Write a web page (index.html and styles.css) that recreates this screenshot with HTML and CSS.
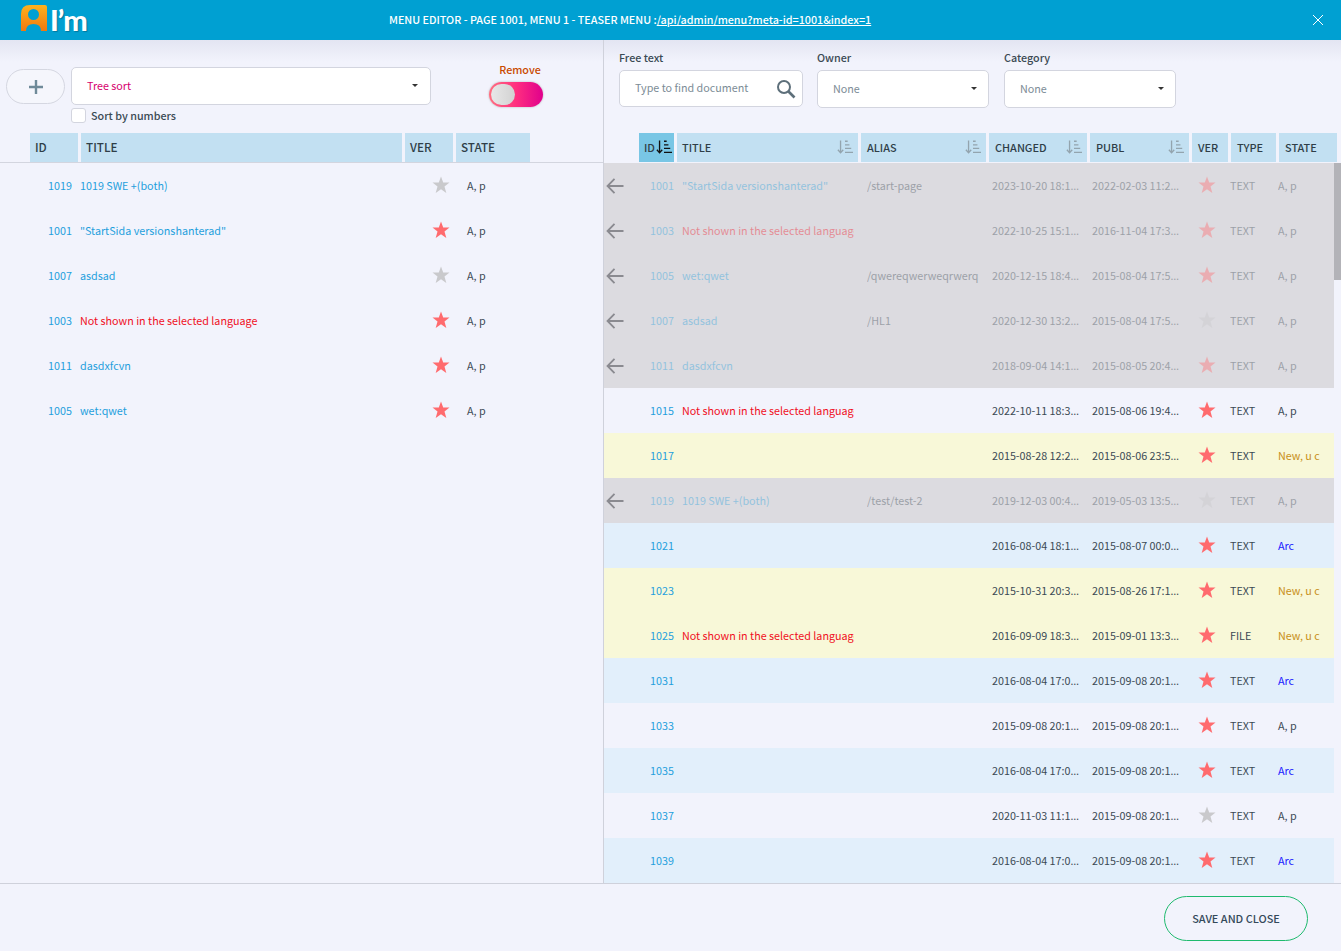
FILE: index.html
```html
<!DOCTYPE html>
<html>
<head>
    <title>Menu editor</title>
    <link rel="stylesheet" href="styles.css">
</head>
<body>
    <svg class="defs" width="0" height="0">
        <symbol id="star" viewBox="0 0 18 18"><path d="M9 .6l2.2 6h6.3l-5 3.9 1.8 6.4L9 13.2l-5.300 3.700 1.800-6.400-5-3.900h6.300z" fill="currentColor"/></symbol>
        <symbol id="back" viewBox="0 0 18 18"><path d="M17.500 9H1.500M8.500 1.800L1.500 9l7 7.200" fill="none" stroke="currentColor" stroke-width="1.800"/></symbol>
        <symbol id="sort" viewBox="0 0 18 16"><path d="M4 0v13M1 10.500L4 14l3-3.500M9 1h3M9 5h5M9 9h7M9 13.500h9" fill="none" stroke="currentColor" stroke-width="1.500"/></symbol>
    </svg>

    <header class="topbar">
        <div class="logo">
            <svg class="logo-mark" width="28" height="28" viewBox="0 0 28 28">
                <defs>
                    <linearGradient id="logo-fill" x1="0" y1="0" x2="0" y2="1">
                        <stop offset="0" stop-color="#ffb21e"/>
                        <stop offset="1" stop-color="#f0780f"/>
                    </linearGradient>
                </defs>
                <path d="M10 1h15q2 0 2 2v24h-6q0-7-7.500-7T6 27H1V10q0-9 9-9zM13.500 5a5.500 5.500 0 1 0 0 11 5.500 5.500 0 0 0 0-11z" fill="url(#logo-fill)"/>
            </svg>
            <span class="logo-text">I’m</span>
        </div>
        <div class="topbar-title">MENU EDITOR - PAGE 1001, MENU 1 - TEASER MENU :<a href="#">/api/admin/menu?meta-id=1001&amp;index=1</a></div>
        <svg class="close" width="12" height="12" viewBox="0 0 12 12"><path d="M1 1l10 10M11 1L1 11" fill="none" stroke="#fff" stroke-width="1"/></svg>
    </header>

    <main class="panes">
        <section class="pane pane-left">
            <div class="toolbar">
                <button class="add-btn"><svg width="14" height="14" viewBox="0 0 14 14"><path d="M7 0v14M0 7h14" stroke="#6f8a99" stroke-width="2.400"/></svg></button>
                <div class="sort-box">
                    <div class="select select-sort"><span>Tree sort</span><i class="caret"></i></div>
                    <label class="check"><i class="check-box"></i>Sort by numbers</label>
                </div>
                <div class="remove-box">
                    <div class="remove-label">Remove</div>
                    <div class="toggle"><i class="knob"></i></div>
                </div>
            </div>

            <div class="thead thead-left">
                <div class="th">ID</div>
                <div class="th">TITLE</div>
                <div class="th">VER</div>
                <div class="th">STATE</div>
            </div>

            <div class="row-left"><a class="id">1019</a><a class="title">1019 SWE +(both)</a><svg class="star gray"><use href="#star"/></svg><span class="state">A, p</span></div>
            <div class="row-left"><a class="id">1001</a><a class="title">"StartSida versionshanterad"</a><svg class="star"><use href="#star"/></svg><span class="state">A, p</span></div>
            <div class="row-left"><a class="id">1007</a><a class="title">asdsad</a><svg class="star gray"><use href="#star"/></svg><span class="state">A, p</span></div>
            <div class="row-left"><a class="id">1003</a><a class="title red">Not shown in the selected language</a><svg class="star"><use href="#star"/></svg><span class="state">A, p</span></div>
            <div class="row-left"><a class="id">1011</a><a class="title">dasdxfcvn</a><svg class="star"><use href="#star"/></svg><span class="state">A, p</span></div>
            <div class="row-left"><a class="id">1005</a><a class="title">wet:qwet</a><svg class="star"><use href="#star"/></svg><span class="state">A, p</span></div>
        </section>

        <section class="pane pane-right">
            <div class="filters">
                <div class="filter">
                    <label>Free text</label>
                    <div class="search">
                        <span>Type to find document</span>
                        <svg width="20" height="20" viewBox="0 0 20 20"><circle cx="8" cy="8" r="6" fill="none" stroke="#5d6f7a" stroke-width="2"/><path d="M12.500 12.500l6 6" stroke="#5d6f7a" stroke-width="2.600"/></svg>
                    </div>
                </div>
                <div class="filter">
                    <label>Owner</label>
                    <div class="select select-filter"><span>None</span><i class="caret"></i></div>
                </div>
                <div class="filter">
                    <label>Category</label>
                    <div class="select select-filter"><span>None</span><i class="caret"></i></div>
                </div>
            </div>

            <div class="thead thead-right">
                <div class="th active">ID<svg class="sort"><use href="#sort"/></svg></div>
                <div class="th">TITLE<svg class="sort"><use href="#sort"/></svg></div>
                <div class="th">ALIAS<svg class="sort"><use href="#sort"/></svg></div>
                <div class="th">CHANGED<svg class="sort"><use href="#sort"/></svg></div>
                <div class="th">PUBL<svg class="sort"><use href="#sort"/></svg></div>
                <div class="th">VER</div>
                <div class="th">TYPE</div>
                <div class="th">STATE</div>
            </div>

            <div class="list-wrap">
                <div class="list">
                    <div class="row off"><svg class="back"><use href="#back"/></svg><a class="id">1001</a><a class="title">"StartSida versionshanterad"</a><span class="alias">/start-page</span><span class="date">2023-10-20 18:1<b>…</b></span><span class="date">2022-02-03 11:2<b>…</b></span><svg class="star"><use href="#star"/></svg><span class="type">TEXT</span><span class="state">A, p</span></div>
                    <div class="row off"><svg class="back"><use href="#back"/></svg><a class="id">1003</a><a class="title red">Not shown in the selected language</a><span class="alias"></span><span class="date">2022-10-25 15:1<b>…</b></span><span class="date">2016-11-04 17:3<b>…</b></span><svg class="star"><use href="#star"/></svg><span class="type">TEXT</span><span class="state">A, p</span></div>
                    <div class="row off"><svg class="back"><use href="#back"/></svg><a class="id">1005</a><a class="title">wet:qwet</a><span class="alias">/qwereqwerweqrwerq</span><span class="date">2020-12-15 18:4<b>…</b></span><span class="date">2015-08-04 17:5<b>…</b></span><svg class="star"><use href="#star"/></svg><span class="type">TEXT</span><span class="state">A, p</span></div>
                    <div class="row off"><svg class="back"><use href="#back"/></svg><a class="id">1007</a><a class="title">asdsad</a><span class="alias">/HL1</span><span class="date">2020-12-30 13:2<b>…</b></span><span class="date">2015-08-04 17:5<b>…</b></span><svg class="star gray"><use href="#star"/></svg><span class="type">TEXT</span><span class="state">A, p</span></div>
                    <div class="row off"><svg class="back"><use href="#back"/></svg><a class="id">1011</a><a class="title">dasdxfcvn</a><span class="alias"></span><span class="date">2018-09-04 14:1<b>…</b></span><span class="date">2015-08-05 20:4<b>…</b></span><svg class="star"><use href="#star"/></svg><span class="type">TEXT</span><span class="state">A, p</span></div>
                    <div class="row"><i></i><a class="id">1015</a><a class="title red">Not shown in the selected language</a><span class="alias"></span><span class="date">2022-10-11 18:3<b>…</b></span><span class="date">2015-08-06 19:4<b>…</b></span><svg class="star"><use href="#star"/></svg><span class="type">TEXT</span><span class="state">A, p</span></div>
                    <div class="row new"><i></i><a class="id">1017</a><a class="title"></a><span class="alias"></span><span class="date">2015-08-28 12:2<b>…</b></span><span class="date">2015-08-06 23:5<b>…</b></span><svg class="star"><use href="#star"/></svg><span class="type">TEXT</span><span class="state">New, u c</span></div>
                    <div class="row off"><svg class="back"><use href="#back"/></svg><a class="id">1019</a><a class="title">1019 SWE +(both)</a><span class="alias">/test/test-2</span><span class="date">2019-12-03 00:4<b>…</b></span><span class="date">2019-05-03 13:5<b>…</b></span><svg class="star gray"><use href="#star"/></svg><span class="type">TEXT</span><span class="state">A, p</span></div>
                    <div class="row arc"><i></i><a class="id">1021</a><a class="title"></a><span class="alias"></span><span class="date">2016-08-04 18:1<b>…</b></span><span class="date">2015-08-07 00:0<b>…</b></span><svg class="star"><use href="#star"/></svg><span class="type">TEXT</span><span class="state">Arc</span></div>
                    <div class="row new"><i></i><a class="id">1023</a><a class="title"></a><span class="alias"></span><span class="date">2015-10-31 20:3<b>…</b></span><span class="date">2015-08-26 17:1<b>…</b></span><svg class="star"><use href="#star"/></svg><span class="type">TEXT</span><span class="state">New, u c</span></div>
                    <div class="row new"><i></i><a class="id">1025</a><a class="title red">Not shown in the selected language</a><span class="alias"></span><span class="date">2016-09-09 18:3<b>…</b></span><span class="date">2015-09-01 13:3<b>…</b></span><svg class="star"><use href="#star"/></svg><span class="type">FILE</span><span class="state">New, u c</span></div>
                    <div class="row arc"><i></i><a class="id">1031</a><a class="title"></a><span class="alias"></span><span class="date">2016-08-04 17:0<b>…</b></span><span class="date">2015-09-08 20:1<b>…</b></span><svg class="star"><use href="#star"/></svg><span class="type">TEXT</span><span class="state">Arc</span></div>
                    <div class="row"><i></i><a class="id">1033</a><a class="title"></a><span class="alias"></span><span class="date">2015-09-08 20:1<b>…</b></span><span class="date">2015-09-08 20:1<b>…</b></span><svg class="star"><use href="#star"/></svg><span class="type">TEXT</span><span class="state">A, p</span></div>
                    <div class="row arc"><i></i><a class="id">1035</a><a class="title"></a><span class="alias"></span><span class="date">2016-08-04 17:0<b>…</b></span><span class="date">2015-09-08 20:1<b>…</b></span><svg class="star"><use href="#star"/></svg><span class="type">TEXT</span><span class="state">Arc</span></div>
                    <div class="row"><i></i><a class="id">1037</a><a class="title"></a><span class="alias"></span><span class="date">2020-11-03 11:1<b>…</b></span><span class="date">2015-09-08 20:1<b>…</b></span><svg class="star gray"><use href="#star"/></svg><span class="type">TEXT</span><span class="state">A, p</span></div>
                    <div class="row arc"><i></i><a class="id">1039</a><a class="title"></a><span class="alias"></span><span class="date">2016-08-04 17:0<b>…</b></span><span class="date">2015-09-08 20:1<b>…</b></span><svg class="star"><use href="#star"/></svg><span class="type">TEXT</span><span class="state">Arc</span></div>
                </div>
                <div class="scroll-track"><div class="scroll-thumb"></div></div>
            </div>
        </section>
    </main>

    <footer class="footer">
        <button class="save-btn">SAVE AND CLOSE</button>
    </footer>
</body>
</html>
```

FILE: styles.css
```css
* {
    box-sizing: border-box;
}

body {
    font-family: "Noto Sans CJK KR", "Noto Sans", sans-serif;
    font-size: 10.75px;
    line-height: 15px;
    color: #3b4a54;
    background-color: #f2f3fc;
    margin: 0;
    height: 951px;
    display: flex;
    flex-direction: column;
    overflow: hidden;
}

.defs {
    position: absolute;
}

/* top bar */
.topbar {
    height: 40px;
    flex: none;
    background-color: #00a0d2;
    display: flex;
    align-items: center;
    color: #fff;
}

.logo {
    width: 389px;
    padding-left: 20px;
    display: flex;
    align-items: center;
    flex: none;
}

.logo-mark {
    margin-top: -4px;
}

.logo-text {
    font-family: "Lato", sans-serif;
    font-weight: 900;
    font-size: 29px;
    line-height: 30px;
    margin-left: 2px;
    letter-spacing: -1px;
    text-shadow: 1px 1px 1px rgba(0, 0, 0, 0.25);
}

.topbar-title {
    font-weight: 500;
    white-space: nowrap;
    margin-top: -2px;
}

.topbar-title a {
    color: #fff;
    text-decoration: underline;
}

.close {
    margin-left: auto;
    margin-right: 17px;
}

/* panes */
.panes {
    flex: 1;
    display: grid;
    grid-template-columns: 604px 1fr;
    min-height: 0;
    background: linear-gradient(#e3e5f2, #f2f3fc 22px);
}

.pane-left {
    border-right: 1px solid #cfd1db;
}

.toolbar {
    height: 93px;
    padding: 24px 0 0 6px;
    display: flex;
    align-items: flex-start;
}

.add-btn {
    width: 59px;
    height: 35px;
    margin-top: 5px;
    margin-right: 6px;
    background-color: #f5f6fc;
    border: 1px solid #d5d7e1;
    border-radius: 18px;
    display: flex;
    align-items: center;
    justify-content: center;
    padding: 0;
}

.sort-box {
    width: 360px;
    margin-top: 3px;
}

.select {
    background-color: #fff;
    border: 1px solid #d3d5df;
    border-radius: 5px;
    display: flex;
    align-items: center;
    justify-content: space-between;
}

.select-sort {
    height: 38px;
    padding: 0 12px 2px 15px;
    color: #d6006e;
}

.select-filter {
    width: 172px;
    height: 38px;
    padding: 0 11px 2px 15px;
    color: #7c8c96;
}

.caret {
    border-left: 3px solid transparent;
    border-right: 3px solid transparent;
    border-top: 3px solid #333;
}

.check {
    display: flex;
    align-items: center;
    margin-top: 3px;
    font-weight: 500;
}

.check-box {
    width: 15px;
    height: 15px;
    margin-right: 5px;
    background-color: #fff;
    border: 1px solid #d3d5df;
    border-radius: 3px;
}

.remove-box {
    margin-left: 58px;
    width: 54px;
}

.remove-label {
    color: #c94a00;
    font-weight: 500;
    text-align: center;
    margin-top: -2px;
    margin-left: 8px;
}

.toggle {
    width: 54px;
    height: 25px;
    margin-top: 5px;
    padding: 2px;
    border-radius: 13px;
    background: linear-gradient(90deg, #ff6f80, #ff2f80 50%, #e0008c);
    box-shadow: 0 0 2px rgba(120, 120, 120, 0.6);
}

.knob {
    display: block;
    width: 24px;
    height: 21px;
    border-radius: 11px;
    background: linear-gradient(90deg, #e8e8e8, #d2d2d2);
}

/* table heads */
.thead {
    height: 30px;
    display: grid;
    font-weight: 500;
}

.th {
    background-color: #c2e0f2;
    color: #2f3e48;
    margin-right: 3px;
    height: 29px;
    padding: 0 5px;
    display: flex;
    align-items: center;
    justify-content: space-between;
    white-space: nowrap;
}

.th.active {
    background-color: #79c6e5;
}

.thead-left {
    grid-template-columns: 51px 324px 51px 77px;
    padding-left: 30px;
    border-bottom: 1px solid #d3d5df;
    font-size: 11.7px;
}

.thead-left .th {
    padding-bottom: 2px;
}

.thead-right {
    grid-template-columns: 38px 184px 128px 101px 102px 39px 48px 61px;
    padding-left: 35px;
    font-size: 10.9px;
}

.thead-right .th:nth-child(n+3) {
    padding-left: 6px;
}

.sort {
    width: 16px;
    height: 15px;
    color: #93a4ae;
    flex: none;
}

.active .sort {
    color: #111;
    margin-right: -3px;
}

/* rows */
a.id,
a.title {
    color: #1f9fdd;
    white-space: nowrap;
    overflow: hidden;
}

a.red {
    color: #f0101e;
}

.star {
    width: 18px;
    height: 18px;
    margin-bottom: 2px;
    color: #ff6b6e;
}

.star.gray {
    color: #c9c9cc;
}

.row-left {
    height: 45px;
    display: grid;
    grid-template-columns: 80px 352px 35px 1fr;
    align-items: center;
}

.row-left .id {
    padding-left: 48px;
}

.filters {
    height: 93px;
    padding: 10px 0 0 15px;
    display: flex;
    gap: 15px;
}

.filter label {
    display: block;
    font-weight: 500;
    margin-bottom: 5px;
}

.search {
    width: 184px;
    height: 37px;
    margin-right: -1px;
    background-color: #fff;
    border: 1px solid #d3d5df;
    border-radius: 5px;
    padding: 0 6px 0 15px;
    color: #7c8c96;
    display: flex;
    align-items: center;
    justify-content: space-between;
}

.search span {
    margin-bottom: 2px;
}

.list-wrap {
    display: flex;
    height: 720px;
}

.list {
    width: 730px;
    flex: none;
    overflow: hidden;
}

.row {
    height: 45px;
    display: grid;
    grid-template-columns: 46px 32px 172px 138px 100px 107px 31px 48px 56px;
    align-items: center;
    white-space: nowrap;
}

.row .star {
    margin-left: -1px;
}

.row .alias {
    padding-left: 13px;
}

.date b {
    font-family: "Noto Sans", sans-serif;
    font-weight: 400;
}

.back {
    width: 18px;
    height: 18px;
    margin-left: 2px;
    color: #8a8a90;
}

.off {
    background-color: #dcdbe0;
}

.off > :not(.back) {
    opacity: 0.4;
}

.new {
    background-color: #f8f8d8;
}

.new .state {
    color: #c8901a;
}

.arc {
    background-color: #e2effb;
}

.arc .state {
    color: #1a1aff;
}

.scroll-track {
    width: 7px;
}

.scroll-thumb {
    height: 117px;
    background-color: #b3b3b8;
}

/* footer */
.footer {
    height: 68px;
    flex: none;
    border-top: 1px solid #cfd1db;
    display: flex;
    justify-content: flex-end;
    align-items: flex-start;
    padding: 12px 33px 0 0;
}

.save-btn {
    width: 144px;
    height: 45px;
    padding: 0 0 2px;
    background-color: transparent;
    border: 1px solid #1fba6e;
    border-radius: 23px;
    font-family: inherit;
    font-size: 10.9px;
    font-weight: 500;
    color: #34495a;
}
```
